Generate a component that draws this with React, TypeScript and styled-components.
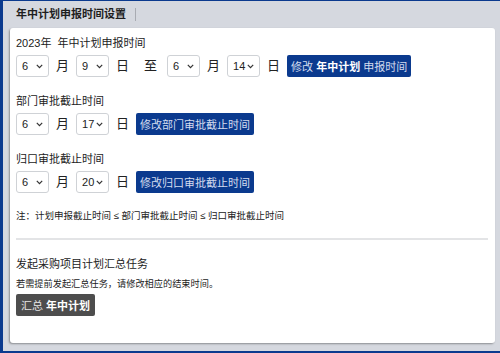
import styled, { createGlobalStyle } from "styled-components";

const GlobalStyle = createGlobalStyle`
  html, body {
    margin: 0;
    padding: 0;
  }
  body {
    font-family: "Liberation Sans", "Noto Sans CJK SC", sans-serif;
    color: #222;
  }
`;

const Frame = styled.div`
  box-sizing: border-box;
  width: 500px;
  height: 353px;
  background: #d5d8df;
  border-left: 3px solid #0b3a8e;
  border-top: 1px solid #0b3a8e;
  border-bottom: 2px solid #0b3a8e;
  display: flex;
  flex-direction: column;
`;

const Header = styled.div`
  height: 27px;
  display: flex;
  align-items: center;
  padding-left: 13px;
`;

const Title = styled.div`
  font-size: 11px;
  font-weight: bold;
  color: #1e1e1e;
  padding-right: 9px;
  border-right: 1px solid #a8abb2;
  line-height: 13px;
`;

const Card = styled.div`
  flex: 1;
  margin: 0 5px 8px 7px;
  background: #fff;
  border-radius: 3px;
  box-shadow: -1px 1px 2px rgba(0, 0, 0, 0.35);
  padding: 7px 7px 0 6px;
`;

const Section = styled.div`
  margin-bottom: 16px;
`;

const Label = styled.div`
  font-size: 11px;
  line-height: 17px;
  margin-bottom: 3px;
`;

const Row = styled.div`
  display: flex;
  align-items: center;
`;

const SelectBox = styled.div`
  position: relative;
  width: 33px;
  height: 22px;
`;

const Select = styled.select`
  appearance: none;
  box-sizing: border-box;
  width: 100%;
  height: 100%;
  font-family: "Liberation Sans", sans-serif;
  font-size: 11px;
  border: 1px solid #cfd2d6;
  border-radius: 3px;
  background: #fff;
  padding: 0 0 0 5px;
  color: #222;
  outline: none;
`;

const Chevron = styled.svg`
  position: absolute;
  right: 6px;
  top: 9px;
  width: 7px;
  height: 5px;
  pointer-events: none;
`;

const Unit = styled.span<{ $left?: number; $right?: number }>`
  margin: 0 ${(p) => p.$right ?? 7}px 0 ${(p) => p.$left ?? 7}px;
  font-size: 13px;
  line-height: 22px;
`;

const BlueButton = styled.button`
  height: 22px;
  border: none;
  border-radius: 2px;
  background: #0b3a8e;
  color: #d3dcef;
  font-family: "Liberation Sans", "Noto Sans CJK SC", sans-serif;
  font-size: 11px;
  padding: 0 4px;
  b {
    color: #fff;
  }
`;

const Note = styled.div`
  font-size: 9.5px;
  line-height: 14px;
  margin-top: 0;
  margin-bottom: 15px;
`;

const Divider = styled.hr`
  border: none;
  border-top: 2px solid #e3e4e6;
  margin: 0 0 16px 0;
`;

const Heading = styled.div`
  font-size: 11px;
  line-height: 17px;
  margin-bottom: 4px;
`;

const Hint = styled.div`
  font-size: 9.2px;
  line-height: 14px;
  margin-bottom: 3px;
`;

const GreyButton = styled.button`
  height: 22px;
  border: none;
  border-radius: 2px;
  background: #4d4d4d;
  color: #e5e5e5;
  font-family: "Liberation Sans", "Noto Sans CJK SC", sans-serif;
  font-size: 11px;
  padding: 0 5px;
  b {
    color: #fff;
  }
`;

const months = Array.from({ length: 12 }, (_, i) => i + 1);
const days = Array.from({ length: 31 }, (_, i) => i + 1);

function NumSelect({ value, options }: { value: number; options: number[] }) {
  return (
    <SelectBox>
      <Select defaultValue={value}>
        {options.map((o) => (
          <option key={o} value={o}>{o}</option>
        ))}
      </Select>
      <Chevron viewBox="0 0 7 5">
        <path d="M0.8 0.8 L3.5 3.6 L6.2 0.8" fill="none" stroke="#333" strokeWidth="1.2" />
      </Chevron>
    </SelectBox>
  );
}

function DateSelect({ month, day }: { month: number; day: number }) {
  return (
    <>
      <NumSelect value={month} options={months} />
      <Unit>月</Unit>
      <NumSelect value={day} options={days} />
      <Unit>日</Unit>
    </>
  );
}

export default function App() {
  return (
    <Frame>
      <GlobalStyle />
      <Header>
        <Title>年中计划申报时间设置</Title>
      </Header>
      <Card>
        <Section>
          <Label>2023年&nbsp; 年中计划申报时间</Label>
          <Row>
            <DateSelect month={6} day={9} />
            <Unit $left={8} $right={10}>至</Unit>
            <DateSelect month={6} day={14} />
            <BlueButton>
              修改 <b>年中计划</b> 申报时间
            </BlueButton>
          </Row>
        </Section>
        <Section>
          <Label>部门审批截止时间</Label>
          <Row>
            <DateSelect month={6} day={17} />
            <BlueButton>修改部门审批截止时间</BlueButton>
          </Row>
        </Section>
        <Section>
          <Label>归口审批截止时间</Label>
          <Row>
            <DateSelect month={6} day={20} />
            <BlueButton>修改归口审批截止时间</BlueButton>
          </Row>
        </Section>
        <Note>注：计划申报截止时间 ≤ 部门审批截止时间 ≤ 归口审批截止时间</Note>
        <Divider />
        <Heading>发起采购项目计划汇总任务</Heading>
        <Hint>若需提前发起汇总任务，请修改相应的结束时间。</Hint>
        <GreyButton>
          汇总 <b>年中计划</b>
        </GreyButton>
      </Card>
    </Frame>
  );
}
